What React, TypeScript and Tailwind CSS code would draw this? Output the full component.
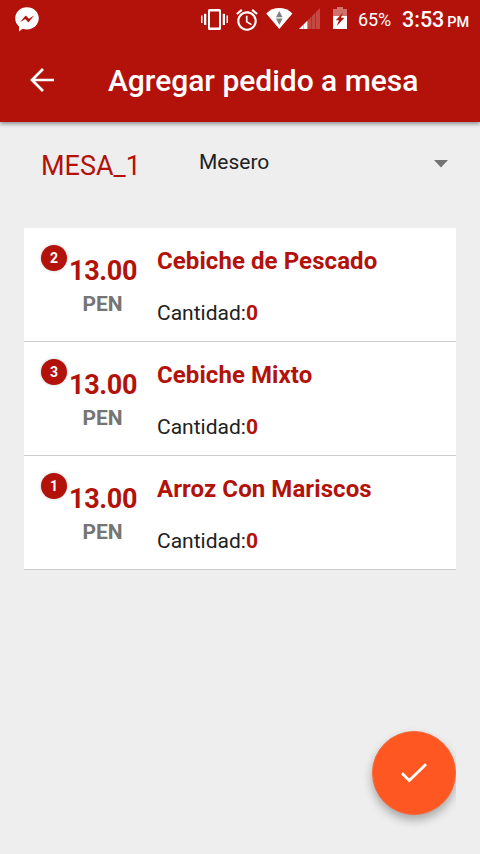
const items = [
  { badge: 2, price: '13.00', name: 'Cebiche de Pescado', quantity: 0 },
  { badge: 3, price: '13.00', name: 'Cebiche Mixto', quantity: 0 },
  { badge: 1, price: '13.00', name: 'Arroz Con Mariscos', quantity: 0 },
]

function StatusBar() {
  return (
    <div className="flex h-9 items-start text-white">
      <svg className="ml-[15px] mt-[7px] h-[25px] w-6" viewBox="0 0 24 25" fill="#fff">
        <path d="M12 .3C5.4.3.2 5.2.2 11.300c0 3.400 1.500 6.300 3.800 8.200v4.900l3.700-2.700c1.400.5 2.800.7 4.300.7 6.600 0 11.800-4.900 11.800-11.100S18.600.3 12 .3z" />
        <path d="M5.200 15l5.500-6.500 3.200 3.200 5.200-3.200-5.700 6.900-3-3.300z" fill="#b2120a" />
      </svg>
      <svg className="ml-[162px] mt-2 h-6 w-[27px]" viewBox="0 0 27 24" fill="#fff">
        <rect x="0" y="7.500" width="1.500" height="7.500" />
        <rect x="3" y="5.800" width="2.300" height="11.200" />
        <rect x="21.700" y="5.800" width="2.300" height="11.200" />
        <rect x="25.500" y="7.500" width="1.500" height="7.500" />
        <path d="M8.500 1h10a1.500 1.500 0 0 1 1.500 1.500v18a1.500 1.500 0 0 1-1.500 1.500h-10a1.500 1.500 0 0 1-1.500-1.500v-18A1.500 1.500 0 0 1 8.500 1zM9 3.500v16h9v-16z" fillRule="evenodd" />
      </svg>
      <svg className="ml-[6px] mt-[7px] h-[26px] w-[26px]" viewBox="0 0 24 24" fill="#fff">
        <path d="M22 5.720l-4.600-3.860-1.290 1.530 4.600 3.860L22 5.720zM7.880 3.390L6.600 1.860 2 5.710l1.290 1.530 4.590-3.850zM12.500 8H11v6l4.750 2.850.75-1.230-4-2.370V8zM12 4c-4.970 0-9 4.030-9 9s4.020 9 9 9c4.970 0 9-4.030 9-9s-4.030-9-9-9zm0 16c-3.870 0-7-3.130-7-7s3.130-7 7-7 7 3.130 7 7-3.130 7-7 7z" />
      </svg>
      <svg className="ml-[6px] mt-2 h-[22px] w-[27px]" viewBox="0 0 27 22">
        <path d="M13.300 21L.2 5.500C4 1.900 8.400.1 13.300.1s9.300 1.800 13.100 5.400z" fill="#fff" />
        <path d="M10 9.200L13.300 3l3.300 6.200zM10 10.500h6.600l-3.300 6.500z" fill="#808080" />
      </svg>
      <svg className="ml-[6px] mt-2 h-[21px] w-[21px]" viewBox="0 0 21 21" fill="#fff">
        <path d="M0 21l4-4v4zM4.300 16.700l4.200-4.200V21H4.300z" />
        <path d="M9 12l3.500-3.500V21H9zM13 8l3.500-3.500V21H13zM17 4l4-4v21h-4z" opacity=".23" />
      </svg>
      <svg className="ml-[13px] mt-[7px] h-[22px] w-[14px]" viewBox="0 0 14 22" fill="#fff">
        <path d="M0 2h4V0h6v2h4v7H0z" opacity=".4" />
        <path d="M0 9h14v13H0z" />
        <path d="M10 5.500L2.800 13.200h3.300L3.600 19.200l7.800-8.500H7.900z" fill="#b2120a" />
      </svg>
      <span className="ml-[11px] mt-[7px] w-[35px] text-[18px] leading-[26px] tracking-[-0.1px]">65%</span>
      <span className="ml-[9px] mt-[7px] whitespace-nowrap text-[21.500px] font-medium leading-[26px]">
        3:53<span className="ml-[3px] text-[14.500px]">PM</span>
      </span>
    </div>
  )
}

function Header() {
  return (
    <header className="relative h-[122px] bg-[#b2120a] shadow-[0_2px_4px_rgba(0,0,0,0.4)]">
      <StatusBar />
      <div className="flex h-[86px] items-center text-white">
        <svg className="ml-[30px] mt-[2px] h-6 w-6" viewBox="0 0 24 24" fill="none" stroke="#fff" strokeWidth="2.700">
          <path d="M24 12H2M13 1L2 12 13 23" />
        </svg>
        <h1 className="ml-[54px] mt-[3px] whitespace-nowrap text-[30px] font-medium leading-9 tracking-[-0.020px]">Agregar pedido a mesa</h1>
      </div>
    </header>
  )
}

export default function App() {
  return (
    <div className="flex h-[854px] w-[480px] flex-col overflow-hidden bg-[#eeeeee] font-['Roboto',sans-serif] text-[#212121]">
      <Header />

      {/* Table and waiter selector */}
      <section className="flex h-[106px] items-start pl-[41px] pr-8">
        <span className="mt-7 w-[158px] text-[27px] leading-8 text-[#b2120a]">MESA_1</span>
        <span className="mt-[27px] flex-1 text-[21px] leading-[26px]">Mesero</span>
        <svg className="mt-[38px] h-2 w-[14px]" viewBox="0 0 14 8" fill="#737373">
          <path d="M0 0h14L7 7.500z" />
        </svg>
      </section>

      {/* Order items */}
      <ul className="mx-6">
        {items.map((item) => (
          <li key={item.badge} className="flex h-[114px] border-b border-[#cccccc] bg-white">
            <div className="flex w-[133px] pl-[17px]">
              <span className="mt-[17px] flex h-[26px] w-[26px] shrink-0 items-center justify-center rounded-full bg-[#b2120a] text-[14px] font-bold text-white shadow-[0_0_3px_rgba(0,0,0,0.25)]">
                {item.badge}
              </span>
              <div className="ml-[2px] mt-[27px] w-[67px] text-center font-bold">
                <div className="text-[27px] leading-8 tracking-[-0.350px] text-[#b2120a]">{item.price}</div>
                <div className="mt-1 text-[21px] leading-[26px] text-[#757575]">PEN</div>
              </div>
            </div>
            <div className="whitespace-nowrap">
              <h2 className="mt-[18px] text-[24px] font-bold leading-[30px] tracking-[0.080px] text-[#b2120a]">{item.name}</h2>
              <p className="mt-6 text-[21px] leading-[26px]">
                Cantidad:<span className="font-bold text-[#b2120a]">{item.quantity}</span>
              </p>
            </div>
          </li>
        ))}
      </ul>

      {/* Confirm button, its shadow is cut off at the right edge of the list */}
      <div className="mr-6 mt-auto flex justify-end overflow-hidden pb-[39px] pl-4 pt-4">
        <button className="flex h-[84px] w-[84px] items-center justify-center rounded-full border border-[#f4683b] bg-[#ff5722] shadow-[0_5px_10px_rgba(0,0,0,0.3)]">
          <svg className="h-5 w-[26px]" viewBox="0 0 26 20" fill="none" stroke="#fff" strokeWidth="2.800">
            <path d="M1 10.200l7.300 7.300L25 1.200" />
          </svg>
        </button>
      </div>
    </div>
  )
}
